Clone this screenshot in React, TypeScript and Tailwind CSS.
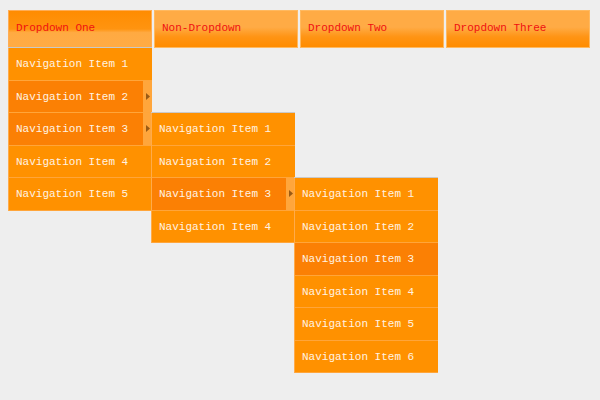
import React from "react"

type Item = { label: string; active?: boolean; sub?: Item[] }

const level3: Item[] = [
  { label: "Navigation Item 1" },
  { label: "Navigation Item 2" },
  { label: "Navigation Item 3", active: true },
  { label: "Navigation Item 4" },
  { label: "Navigation Item 5" },
  { label: "Navigation Item 6" },
]

const level2: Item[] = [
  { label: "Navigation Item 1" },
  { label: "Navigation Item 2" },
  { label: "Navigation Item 3", active: true, sub: level3 },
  { label: "Navigation Item 4" },
]

const level1: Item[] = [
  { label: "Navigation Item 1" },
  { label: "Navigation Item 2", active: true },
  { label: "Navigation Item 3", active: true, sub: level2 },
  { label: "Navigation Item 4" },
  { label: "Navigation Item 5" },
]

const headers = ["Dropdown One", "Non-Dropdown", "Dropdown Two", "Dropdown Three"]

function Arrow() {
  return (
    <div className="w-[9px] self-stretch bg-[#ffa63c] flex items-center justify-center">
      <svg width="4" height="7" viewBox="0 0 4 7">
        <path d="M0 0 L4 3.5 L0 7 Z" fill="#9a5a14" />
      </svg>
    </div>
  )
}

function Menu({ items, hasArrows }: { items: Item[]; hasArrows?: boolean }) {
  return (
    <ul className="w-[144px] border-l border-[#ffab4a] shadow-[0_-1px_0_#c9c9c9]">
      {items.map((item, i) => (
        <li key={i} className="relative h-[32.5px] border-b border-[#ffa53a] bg-[#ff9100] flex">
          <div
            className={
              item.active
                ? "flex-1 flex items-center pl-[7px] pt-[1px] bg-[#fb8004] text-[#fff3e3]"
                : "flex-1 flex items-center pl-[7px] pt-[1px] text-[#fff3e3]"
            }
          >
            {item.label}
          </div>
          {item.active && hasArrows && <Arrow />}
          {item.sub && (
            <div className="absolute left-[calc(100%-1px)] top-0 z-10">
              <Menu items={item.sub} hasArrows={item.sub.some((s) => s.sub)} />
            </div>
          )}
        </li>
      ))}
    </ul>
  )
}

export default function App() {
  return (
    <div
      className="w-[600px] h-[400px] bg-[#eeeeee] pt-[10px] pl-[8px] text-[11px]"
      style={{ fontFamily: '"Liberation Mono", "Courier New", monospace' }}
    >
      <div className="flex gap-[2px] items-start">
        {headers.map((h, i) => (
          <div key={h} className="w-[144px] relative">
            <div
              className={
                i === 0
                  ? "h-[38px] flex items-center pl-[7px] pb-[2px] text-[#f01010] border border-[#ffad55] bg-[linear-gradient(to_bottom,#ff8c00_0%,#ff9410_50%,#ffaa42_60%,#ffab45_100%)]"
                  : "h-[38px] flex items-center pl-[7px] pb-[2px] text-[#f01010] border border-[#ffb960] bg-[linear-gradient(to_bottom,#ffab45_0%,#ffab45_45%,#ff9414_72%,#ff8c00_100%)]"
              }
            >
              {h}
            </div>
            {i === 0 && (
              <div className="absolute left-0 top-full">
                <Menu items={level1} hasArrows />
              </div>
            )}
          </div>
        ))}
      </div>
    </div>
  )
}
